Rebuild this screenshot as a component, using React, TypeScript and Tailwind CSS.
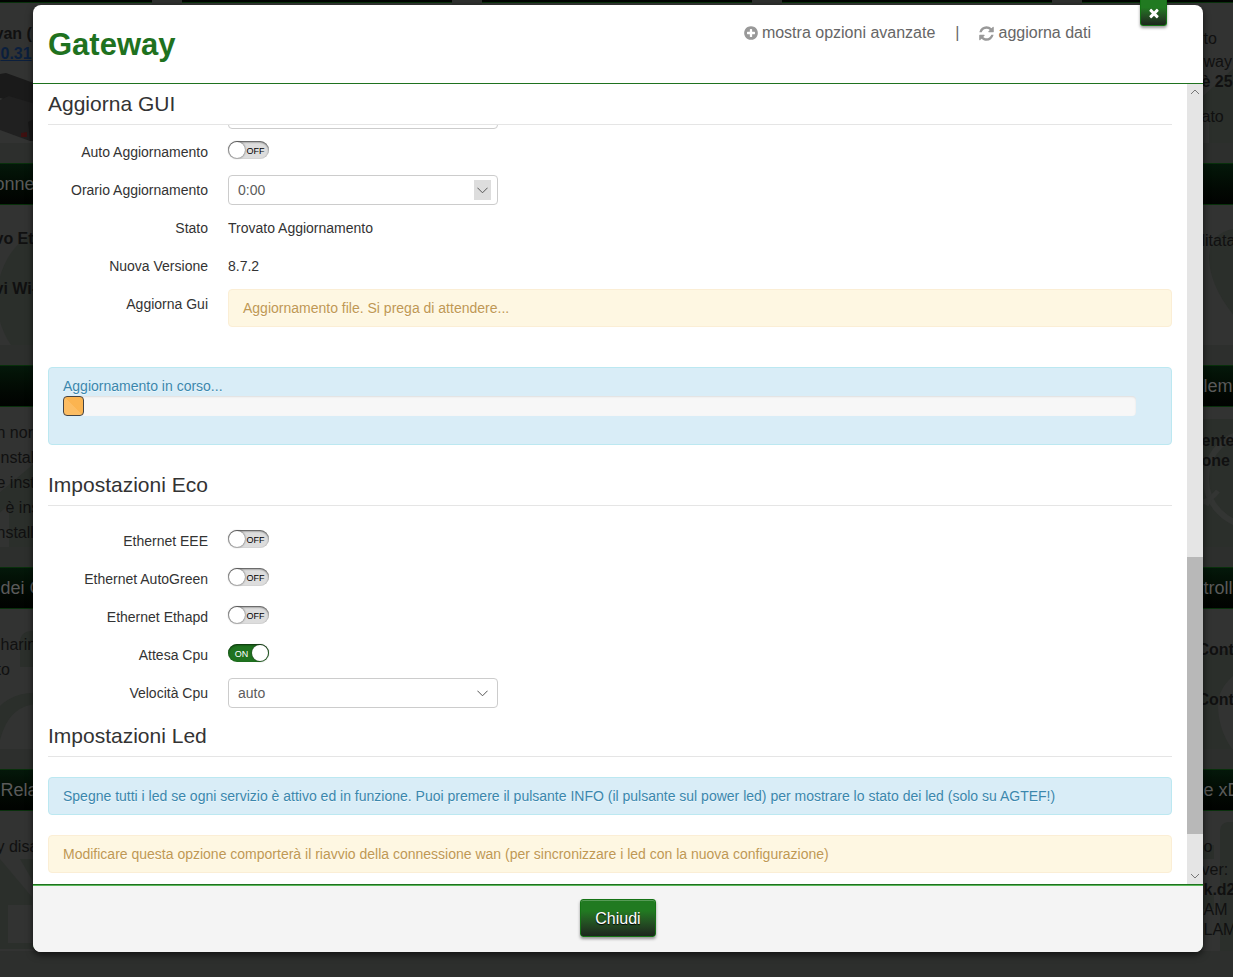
import React, { useState } from 'react';

type Line = { text: string; className: string };
type CardData = { title?: string; titleClassName?: string; lines: Line[]; art?: React.ReactNode };

const leftCards: CardData[] = [
  {
    lines: [
      { text: 'van (', className: 'mt-[21px] font-bold' },
      { text: '0.31', className: 'ml-[6px] font-bold text-[#0b1f3d] underline' },
    ],
    art: (
      <>
        <path d="M118 71 L124 70 L160 83 V107 L118 95z" fill="#1a1a1a" />
        <path d="M118 97 L127 93 L160 103 V137 L148 138 L118 127z" fill="#202020" />
        <path d="M146 119 L160 112 V137 L148 138z" fill="#171717" />
        <path d="M139 130 L145 129 V134 L139 134z" fill="#3d1111" />
      </>
    ),
  },
  {
    title: 'onne',
    lines: [
      { text: 'vo Et', className: 'mt-6 font-bold' },
      { text: 'vi Wi-', className: 'mt-[30px] font-bold' },
    ],
    art: <ellipse cx="176" cy="94" rx="61" ry="72" fill="#2b2f2b" />,
  },
  {
    lines: [
      { text: 'n nor', className: 'mt-4 ml-[2px]' },
      { text: 'nstal', className: 'mt-[5px] ml-[6px]' },
      { text: 'e inst', className: 'mt-[5px] ml-[2px]' },
      { text: 'è ins', className: 'mt-[5px] ml-[11px]' },
      { text: 'nstalla', className: 'mt-[5px] ml-[2px]' },
    ],
    art: <path d="M110 92 L160 50 V140 H127 V98 L110 112z" fill="#2b2f2b" />,
  },
  {
    title: 'dei C',
    titleClassName: 'ml-[6px]',
    lines: [
      { text: 'harin', className: 'mt-[26px] ml-[6px]' },
      { text: 'to', className: 'mt-[5px] ml-[2px]' },
    ],
    art: (
      <>
        <path d="M138 58 V34 Q138 22 150 22 H160 V58z" fill="#2b2f2b" />
        <path d="M110 108 Q124 82 160 84 V95 Q124 93 116 140 H110z" fill="#2b2f2b" />
      </>
    ),
  },
  {
    title: 'Rela',
    titleClassName: 'ml-[6px]',
    lines: [{ text: 'y disa', className: 'mt-[26px] ml-[2px]' }],
    art: <path d="M118 48 L150 86 V94 H126 V132 H160 V138 H118z M138 48 H160 V86z" fill="#2b2f2b" />,
  },
];

const rightCards: CardData[] = [
  {
    lines: [
      { text: 'to', className: 'mt-[26px]' },
      { text: 'way', className: 'mt-[3px]' },
      { text: 'è 255', className: '-ml-[2px] font-bold' },
      { text: 'ato', className: 'mt-[15px] -ml-[2px]' },
    ],
    art: <path d="M120 94 L155 62 V140 H127 V108 L120 112z" fill="#2b2f2b" />,
  },
  {
    title: '',
    lines: [{ text: 'litata', className: 'mt-[26px] -ml-[2px]' }],
    art: <path d="M160 23 Q128 24 127 53 Q128 85 160 120z" fill="#2b2f2b" />,
  },
  {
    title: 'lem',
    lines: [
      { text: 'ente', className: 'mt-6 -ml-[2px] font-bold' },
      { text: 'one', className: '-ml-[2px] font-bold' },
    ],
    art: (
      <>
        <rect x="120" y="12" width="40" height="128" fill="#2b2f2b" />
        <circle cx="171" cy="72" r="47" fill="none" stroke="#333533" strokeWidth="6" />
        <path d="M118 96 Q128 94 136 84 M128 92 L124 98" fill="none" stroke="#333533" strokeWidth="5" />
      </>
    ),
  },
  {
    title: 'trolla',
    lines: [
      { text: 'Cont', className: 'mt-[31px] -ml-[6px] font-bold' },
      { text: 'Cont', className: 'mt-[30px] -ml-[6px] font-bold' },
    ],
    art: <path d="M118 48 Q132 42 160 40 V60 Q136 76 136 96 Q136 120 150 140 H118z" fill="#2b2f2b" />,
  },
  {
    title: 'e xD',
    lines: [
      { text: 'o', className: 'mt-[26px]' },
      { text: 'ver:', className: 'mt-[3px] -ml-[2px]' },
      { text: 'k.d2', className: 'font-bold' },
      { text: 'AM :', className: '' },
      { text: 'LAM', className: '' },
    ],
    art: <path d="M138 140 V20 Q138 12 146 11 H160 V140z M120 34 H132 V48 H120z M120 84 H132 V98 H120z" fill="#2b2f2b" />,
  },
];

const Card: React.FC<{ card: CardData; pad: string }> = ({ card, pad }) => (
  <div className="h-[182px] bg-[#323332]">
    <div className={`h-[42px] border-y border-[#08300b] bg-linear-to-b from-[#04180a] to-[#010301] text-lg leading-10 whitespace-nowrap text-[#5a5a5a] ${pad}`}>
      <p className={card.titleClassName}>{card.title}</p>
    </div>
    <div className={`relative h-[140px] text-base leading-5 whitespace-nowrap text-[#101010] ${pad}`}>
      <svg className="absolute inset-0" width="270" height="140" viewBox="0 0 270 140" aria-hidden="true">
        {card.art}
      </svg>
      <div className="relative flex flex-col">
        {card.lines.map((line, i) => (
          <p key={i} className={line.className}>{line.text}</p>
        ))}
      </div>
    </div>
  </div>
);

const blank: CardData[] = [1, 2, 3, 4, 5].map(() => ({ lines: [] }));

const Dashboard: React.FC = () => (
  <div className="absolute inset-0 flex justify-center overflow-hidden bg-[#2d2f2d]" aria-hidden="true">
    <div className="-mt-[39px] flex shrink-0 gap-[30px]">
      {[leftCards, blank, blank, blank, rightCards].map((column, i) => (
        <div key={i} className="flex w-[270px] flex-col gap-5">
          {column.map((card, j) => (
            <Card key={j} card={card} pad={i === 0 ? 'pl-[113px]' : 'pl-[122px]'} />
          ))}
        </div>
      ))}
    </div>
  </div>
);

const Heading: React.FC<{ children: React.ReactNode; className?: string }> = ({ children, className = '' }) => (
  <h2 className={`border-b border-[#e5e5e5] text-[21px] leading-10 text-[#333] ${className}`}>{children}</h2>
);

const Row: React.FC<{ label: string; htmlFor?: string; children: React.ReactNode }> = ({ label, htmlFor, children }) => (
  <div className="flex min-h-[38px] items-center gap-5">
    {htmlFor ? (
      <label htmlFor={htmlFor} className="w-40 shrink-0 text-right">{label}</label>
    ) : (
      <span className="w-40 shrink-0 text-right">{label}</span>
    )}
    {children}
  </div>
);

const Toggle: React.FC<{ id: string; initial?: boolean }> = ({ id, initial = false }) => {
  const [on, setOn] = useState(initial);

  return (
    <span
      className={`relative mb-1 flex h-[18px] w-[41px] items-center rounded-full px-px text-[9px] leading-none ${
        on
          ? 'flex-row-reverse bg-[#1f721f] text-white shadow-[inset_0_1px_2px_#0b300b]'
          : 'bg-[#dddddd] text-black shadow-[inset_0_1px_2px_#444]'
      }`}
    >
      <span className="size-4 shrink-0 rounded-full bg-white shadow-[0_0_2px_#333]" />
      <span className={`flex-1 pt-[2px] text-center ${on ? 'pl-[2px]' : 'pr-[2px]'}`}>{on ? 'ON' : 'OFF'}</span>
      <input
        id={id}
        type="checkbox"
        role="switch"
        checked={on}
        onChange={() => setOn(!on)}
        className="absolute inset-0 cursor-pointer opacity-0"
      />
    </span>
  );
};

const Select: React.FC<{ id: string; options: string[]; active?: boolean }> = ({ id, options, active }) => (
  <div className="relative w-[270px]">
    <select
      id={id}
      className="block h-[30px] w-full appearance-none rounded border border-[#cccccc] bg-white px-[9px] text-sm text-[#5c5c5c]"
    >
      {options.map((option) => (
        <option key={option}>{option}</option>
      ))}
    </select>
    <span
      className={`pointer-events-none absolute top-[5px] right-[7px] flex h-5 w-[17px] items-center justify-center ${
        active ? 'bg-[#dddddd]' : ''
      }`}
    >
      <svg width="11" height="7" viewBox="0 0 11 7" fill="none" stroke="#555">
        <path d="M0.4 0.7 L5.5 5.8 L10.6 0.7" />
      </svg>
    </span>
  </div>
);

const Alert: React.FC<{ kind: 'info' | 'warning'; className?: string; children: React.ReactNode }> = ({
  kind,
  className = '',
  children,
}) => (
  <div
    className={`rounded border px-[14px] py-2 leading-5 [text-shadow:0_1px_0_rgba(255,255,255,0.5)] ${
      kind === 'info'
        ? 'border-[#bce8f1] bg-[#d9edf7] text-[#3a87ad]'
        : 'border-[#fbeed5] bg-[#fef7e2] text-[#c09853]'
    } ${className}`}
  >
    {children}
  </div>
);

const Scrollbar: React.FC = () => (
  <div className="flex w-4 shrink-0 flex-col items-center bg-[#e5e5e5]" aria-hidden="true">
    <svg width="16" height="16" viewBox="0 0 16 16" fill="none" stroke="#777">
      <path d="M4 10 L8 6 L12 10" />
    </svg>
    <div className="flex-1" />
    <div className="mb-[34px] h-[277px] w-full bg-[#b8b8b8]" />
    <svg width="16" height="16" viewBox="0 0 16 16" fill="none" stroke="#777">
      <path d="M4 6 L8 10 L12 6" />
    </svg>
  </div>
);

export default function App() {
  return (
    <div className="relative min-h-screen overflow-hidden bg-[#2d2d2d] font-['Liberation_Sans',Arial,sans-serif] text-sm text-[#333]">
      <Dashboard />

      <div className="relative pt-[5px] pr-[30px] pb-[25px] pl-[33px]">
        <div role="dialog" aria-labelledby="dialog-title" className="relative rounded-lg bg-white shadow-[0_3px_7px_rgba(0,0,0,0.6)]">
          <button
            type="button"
            aria-label="Chiudi finestra"
            className="absolute -top-[5px] right-9 flex h-[26px] w-[27px] items-center justify-center rounded-b-[3px] border border-t-0 border-[#157315] bg-linear-to-b from-[#217a21] from-30% to-[#1c261c] shadow-[0_2px_3px_rgba(0,0,0,0.4)]"
          >
            <svg width="14" height="14" viewBox="0 0 1792 1792" fill="#fff">
              <path d="M1490 1322q0 40-28 68l-136 136q-28 28-68 28t-68-28l-294-294-294 294q-28 28-68 28t-68-28l-136-136q-28-28-28-68t28-68l294-294-294-294q-28-28-28-68t28-68l136-136q28-28 68-28t68 28l294 294 294-294q28-28 68-28t68 28l136 136q28 28 28 68t-28 68l-294 294 294 294q28 28 28 68z" />
            </svg>
          </button>

          <header className="flex h-[79px] items-start justify-between border-b border-[#1f721f] pr-28 pl-[15px]">
            <h1 id="dialog-title" className="pt-5 text-[31px] leading-10 font-bold text-[#1f721f]">Gateway</h1>
            <div className="flex items-center pt-[18px] text-base leading-5 text-[#666]">
              <a href="#" className="flex items-center gap-1">
                <svg width="14" height="16" viewBox="128 0 1536 1792" fill="#999">
                  <path d="M1344 960v-128q0-26-19-45t-45-19h-256v-256q0-26-19-45t-45-19h-128q-26 0-45 19t-19 45v256h-256q-26 0-45 19t-19 45v128q0 26 19 45t45 19h256v256q0 26 19 45t45 19h128q26 0 45-19t19-45v-256h256q26 0 45-19t19-45zm320-64q0 209-103 385.5t-279.5 279.5-385.5 103-385.5-103-279.5-279.5-103-385.5 103-385.5 279.5-279.5 385.5-103 385.5 103 279.5 279.5 103 385.5z" />
                </svg>
                mostra opzioni avanzate
              </a>
              <span className="px-5">|</span>
              <a href="#" className="flex items-center gap-1">
                <svg width="15" height="17" viewBox="0 0 1536 1792" fill="#999">
                  <path d="M1511 1056q0 5-1 7-64 268-268 434.5t-478 166.5q-146 0-282.5-55t-243.5-157l-129 129q-19 19-45 19t-45-19-19-45v-448q0-26 19-45t45-19h448q26 0 45 19t19 45-19 45l-137 137q71 66 161 102t187 36q134 0 250-65t186-179q11-17 53-117 8-23 30-23h192q13 0 22.5 9.5t9.5 22.5zm25-800v448q0 26-19 45t-45 19h-448q-26 0-45-19t-19-45 19-45l138-138q-148-137-349-137-134 0-250 65t-186 179q-11 17-53 117-8 23-30 23h-199q-13 0-22.5-9.5t-9.5-22.5v-7q65-268 270-434.5t480-166.5q146 0 284 55.5t245 156.5l130-129q19-19 45-19t45 19 19 45z" />
                </svg>
                aggiorna dati
              </a>
            </div>
          </header>

          <div className="flex">
            <div className="min-w-0 flex-1 px-[15px] pb-[11px]">
              <Heading>Aggiorna GUI</Heading>
              {/* previous field, scrolled under the heading */}
              <div className="mb-1 flex h-1 items-end overflow-hidden pl-[180px]">
                <input
                  type="text"
                  aria-label="Versione"
                  className="h-[30px] w-[270px] shrink-0 rounded border border-[#cccccc] bg-white"
                />
              </div>

              <Row label="Auto Aggiornamento" htmlFor="auto-update">
                <Toggle id="auto-update" />
              </Row>
              <Row label="Orario Aggiornamento" htmlFor="update-time">
                <Select id="update-time" options={['0:00']} active />
              </Row>
              <Row label="Stato">
                <span>Trovato Aggiornamento</span>
              </Row>
              <Row label="Nuova Versione">
                <span>8.7.2</span>
              </Row>
              <div className="flex items-start gap-5 pt-1">
                <span className="w-40 shrink-0 pt-[5px] text-right leading-5">Aggiorna Gui</span>
                <Alert kind="warning" className="flex-1">Aggiornamento file. Si prega di attendere...</Alert>
              </div>

              <Alert kind="info" className="mt-10 pr-[35px] pb-7">
                <p id="progress-label">Aggiornamento in corso...</p>
                <div
                  role="progressbar"
                  aria-labelledby="progress-label"
                  className="h-5 rounded bg-[#f7f7f7] shadow-[inset_0_1px_2px_rgba(0,0,0,0.1)]"
                >
                  <div className="h-full w-[21px] rounded border border-[#444] bg-linear-to-tr from-[#fcbd63] from-50% to-[#fbb450] to-50%" />
                </div>
              </Alert>

              <Heading className="mt-5 mb-4">Impostazioni Eco</Heading>
              <Row label="Ethernet EEE" htmlFor="eth-eee">
                <Toggle id="eth-eee" />
              </Row>
              <Row label="Ethernet AutoGreen" htmlFor="eth-autogreen">
                <Toggle id="eth-autogreen" />
              </Row>
              <Row label="Ethernet Ethapd" htmlFor="eth-ethapd">
                <Toggle id="eth-ethapd" />
              </Row>
              <Row label="Attesa Cpu" htmlFor="cpu-wait">
                <Toggle id="cpu-wait" initial />
              </Row>
              <Row label="Velocità Cpu" htmlFor="cpu-speed">
                <Select id="cpu-speed" options={['auto']} />
              </Row>

              <Heading className="mt-1">Impostazioni Led</Heading>
              <Alert kind="info" className="mt-5">
                Spegne tutti i led se ogni servizio è attivo ed in funzione. Puoi premere il pulsante INFO (il pulsante sul power led) per mostrare lo stato dei led (solo su AGTEF!)
              </Alert>
              <Alert kind="warning" className="mt-5">
                Modificare questa opzione comporterà il riavvio della connessione wan (per sincronizzare i led con la nuova configurazione)
              </Alert>
            </div>
            <Scrollbar />
          </div>

          <footer className="flex h-[68px] justify-center rounded-b-lg border-t border-[#1f721f] bg-[#f4f4f4] pt-[14px] shadow-[inset_0_1px_0_#5cb85c]">
            <button
              type="button"
              className="h-[38px] rounded-[3px] border border-[#157315] bg-linear-to-b from-[#217a21] from-30% to-[#1c261c] px-[14px] pt-[2px] text-base text-white shadow-[inset_0_1px_0_rgba(255,255,255,0.25),0_2px_3px_rgba(0,0,0,0.4)] [text-shadow:0_1px_1px_#000]"
            >
              Chiudi
            </button>
          </footer>
        </div>
      </div>
    </div>
  );
}
